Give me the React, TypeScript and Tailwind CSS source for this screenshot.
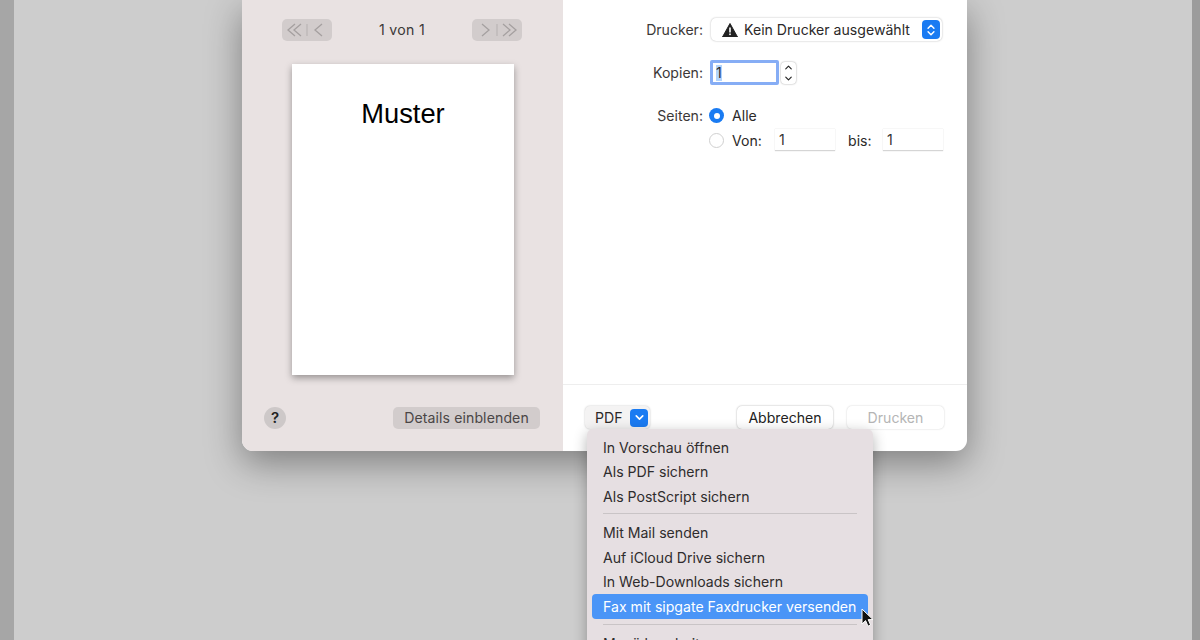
import { ChevronDown, ChevronUp, ChevronsUpDown } from "lucide-react";

const font = "font-['Inter','Liberation_Sans',sans-serif]";

function NavButton({ side }: { side: "left" | "right" }) {
  const chevrons = side === "left" ? "M13 5 6 11l7 6M19 5l-7 6 7 6M40 5l-7 6 7 6" : "M10 5l7 6-7 6M31 5l7 6-7 6M37 5l7 6-7 6";
  return (
    <div className="flex h-[22px] w-[50px] items-center justify-center rounded-[5px] bg-[#d2cccc]">
      <svg width="50" height="22" viewBox="0 0 50 22" fill="none" stroke="#a5a0a0" strokeWidth="1.3">
        <path d={chevrons} />
        <path d="M25 5v12" stroke="#b5b0b0" strokeWidth="1" />
      </svg>
    </div>
  );
}

function MenuItem({ label, active }: { label: string; active?: boolean }) {
  return (
    <div
      className={
        active
          ? "mx-[5px] flex h-[24.5px] items-center rounded-[4px] bg-[#4a95f7] px-[11px] text-white"
          : "mx-[5px] flex h-[24.5px] items-center px-[11px] text-[#2f2c2d]"
      }
    >
      {label}
    </div>
  );
}

function Field({ value, className }: { value: string; className: string }) {
  return (
    <div className={`flex h-[22px] items-center border-b border-[#d5d5d5] bg-white px-1 text-[#333] shadow-[0_0_1px_rgba(0,0,0,0.2)] ${className}`}>
      {value}
    </div>
  );
}

export default function App() {
  return (
    <div className={`flex h-[640px] w-[1200px] overflow-hidden bg-[#cdcdcd] text-[14.1px] ${font}`}>
      <div className="w-[14px] shrink-0 bg-[#a6a6a6]" />

      <div className="flex-1 pl-[228px]">
        {/* print sheet */}
        <div className="relative flex h-[451px] w-[725px] rounded-b-[11px] bg-white shadow-[0_12px_36px_rgba(0,0,0,0.38)]">
          <div className="flex w-[321px] shrink-0 flex-col rounded-bl-[11px] bg-[#e9e2e2] pt-[19px]">
            <div className="flex items-center justify-between pl-[40px] pr-[41px]">
              <NavButton side="left" />
              <span className="tracking-[0.3px] text-[#3b3838]">1 von 1</span>
              <NavButton side="right" />
            </div>
            <div className="ml-[50px] mt-[23px] flex h-[311px] w-[222px] justify-center bg-white pt-[33px] font-['Liberation_Sans',sans-serif] text-[27.3px] leading-[34px] text-black shadow-[0_3px_7px_rgba(0,0,0,0.35)]">
              Muster
            </div>
            <div className="mt-[32px] flex items-center justify-between pl-[22px] pr-[23px]">
              <div className="flex h-[22px] w-[22px] items-center justify-center rounded-full bg-[#cdc8c8] text-[15px] font-semibold text-[#222]">
                ?
              </div>
              <div className="flex h-[22px] w-[147px] items-center justify-center rounded-[5px] bg-[#d2cccc] tracking-[0.1px] text-[#4a4646]">
                Details einblenden
              </div>
            </div>
          </div>

          <div className="flex min-w-0 flex-1 flex-col text-[#3b3838]">
            <div className="h-[385px] border-b border-[#eeeeee] pt-[18px]">
              <div className="flex items-center">
                <span className="w-[140px] text-right">Drucker:</span>
                <div className="ml-[8px] flex h-[23px] w-[231px] items-center rounded-[5px] bg-white pl-[11px] pr-[2px] shadow-[0_0_2px_rgba(0,0,0,0.3)]">
                  <svg width="16" height="14" viewBox="0 0 16 14" className="shrink-0">
                    <path d="M8 0.5 15.5 14H.5z" fill="#222" stroke="#222" strokeLinejoin="round" />
                    <rect x="7.2" y="4.5" width="1.6" height="5" fill="#fff" />
                    <rect x="7.2" y="10.5" width="1.6" height="1.6" fill="#fff" />
                  </svg>
                  <span className="ml-[6px] flex-1 whitespace-nowrap text-[#2b2929]">Kein Drucker ausgewählt</span>
                  <div className="flex h-[19px] w-[18px] items-center justify-center rounded-[4px] bg-[#1a7bf2] text-white">
                    <ChevronsUpDown size={14} strokeWidth={2.5} />
                  </div>
                </div>
              </div>

              <div className="mt-[19px] flex items-center">
                <span className="w-[140px] text-right">Kopien:</span>
                <div className="ml-[7px] flex h-[25px] w-[69px] items-center rounded-[2px] border-[3px] border-[#86adf5] bg-white pl-[3px] text-[#2b2929]">
                  <span className="bg-[#b3d4fc] leading-[16px]">1</span>
                </div>
                <div className="ml-[2px] flex h-[22px] w-[15px] flex-col items-center justify-center rounded-[4px] bg-white text-[#222] shadow-[0_0_2px_rgba(0,0,0,0.4)]">
                  <ChevronUp size={11} strokeWidth={2.5} />
                  <ChevronDown size={11} strokeWidth={2.5} />
                </div>
              </div>

              <div className="mt-[20px] flex items-center">
                <span className="w-[140px] text-right">Seiten:</span>
                <div className="ml-[6px] flex h-[15px] w-[15px] items-center justify-center rounded-full bg-[#1a7bf2]">
                  <div className="h-[6px] w-[6px] rounded-full bg-white" />
                </div>
                <span className="ml-[8px] text-[#2b2929]">Alle</span>
              </div>

              <div className="mt-[3px] flex items-center">
                <div className="ml-[146px] h-[15px] w-[15px] rounded-full border border-[#d0d0d0] bg-white" />
                <span className="ml-[8px] w-[43px] text-[#2b2929]">Von:</span>
                <Field value="1" className="w-[60px]" />
                <span className="ml-[13px] w-[35px] text-[#2b2929]">bis:</span>
                <Field value="1" className="w-[60px]" />
              </div>
            </div>

            <div className="flex items-center pl-[22px] pt-[21px]">
              <div className="flex h-[23px] w-[65px] items-center rounded-[5px] bg-[#f4f3f3] pl-[10px] pr-[2px] shadow-[0_0_2px_rgba(0,0,0,0.25)]">
                <span className="flex-1 text-[#2b2929]">PDF</span>
                <div className="flex h-[18px] w-[18px] items-center justify-center rounded-[4px] bg-[#1a7bf2] text-white">
                  <ChevronDown size={13} strokeWidth={3} />
                </div>
              </div>
              <div className="ml-[87px] flex h-[23px] w-[96px] items-center justify-center rounded-[5px] bg-white text-[#222] shadow-[0_0_2px_rgba(0,0,0,0.35)]">
                Abbrechen
              </div>
              <div className="ml-[14px] flex h-[23px] w-[97px] items-center justify-center rounded-[5px] bg-white text-[#b5b5b5] shadow-[0_0_2px_rgba(0,0,0,0.2)]">
                Drucken
              </div>
            </div>
          </div>

          {/* PDF menu */}
          <div className="absolute left-[345px] top-[429px] h-[240px] w-[286px] rounded-[6px] bg-[#e6dfe2] pt-[6px] shadow-[0_4px_14px_rgba(0,0,0,0.3)]">
            <MenuItem label="In Vorschau öffnen" />
            <MenuItem label="Als PDF sichern" />
            <MenuItem label="Als PostScript sichern" />
            <div className="mx-[16px] mb-[6.5px] mt-[4.5px] h-px bg-[#c9c4c6]" />
            <MenuItem label="Mit Mail senden" />
            <MenuItem label="Auf iCloud Drive sichern" />
            <MenuItem label="In Web-Downloads sichern" />
            <MenuItem label="Fax mit sipgate Faxdrucker versenden" active />
            <div className="mx-[16px] mb-[6.5px] mt-[5px] h-px bg-[#c9c4c6]" />
            <MenuItem label="Menü bearbeiten …" />
          </div>

          {/* mouse pointer */}
          <svg width="14" height="20" viewBox="0 0 14 20" className="absolute left-[619px] top-[608px]">
            <path d="M1 1v15l3.6-3.4 2.4 5.6 2.6-1.1-2.4-5.5H12z" fill="#111" stroke="#fff" strokeWidth="1" />
          </svg>
        </div>
      </div>

      <div className="w-[8px] shrink-0 bg-[#9c9c9c]" />
    </div>
  );
}
